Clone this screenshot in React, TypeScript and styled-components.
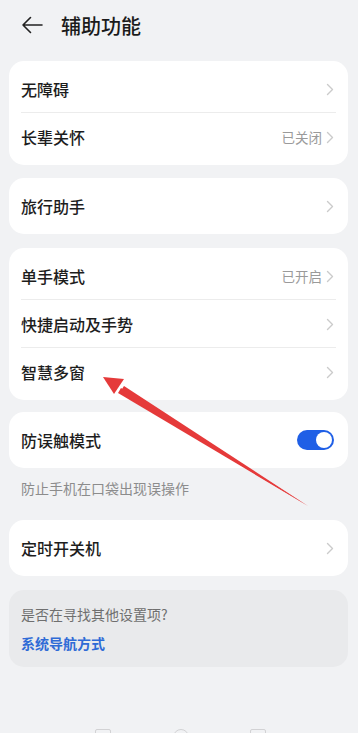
import styled, { createGlobalStyle } from "styled-components";

const GlobalStyle = createGlobalStyle`
  html, body {
    margin: 0;
    padding: 0;
    background: #f1f2f4;
  }
  body {
    font-family: "Noto Sans CJK SC", "Noto Sans", sans-serif;
    color: #1b1b1b;
  }
`;

const Page = styled.div`
  position: relative;
  width: 358px;
  height: 733px;
  overflow: hidden;
  display: flex;
  flex-direction: column;
  background: #f1f2f4;
`;

const Header = styled.div`
  height: 50px;
  display: flex;
  align-items: center;
  padding-left: 21px;
  gap: 18px;
  margin-bottom: 11px;
`;

const Title = styled.div`
  font-size: 20px;
  font-weight: 500;
  color: #1b1b1b;
`;

const List = styled.div`
  display: flex;
  flex-direction: column;
  padding: 0 10px 0 9px;
`;

const Card = styled.div<{ $gap?: number; $muted?: boolean }>`
  background: ${(p) => (p.$muted ? "#e9eaec" : "#ffffff")};
  border-radius: 15px;
  padding: 4px 0;
  margin-bottom: ${(p) => p.$gap ?? 13}px;
`;

const Row = styled.div<{ $divider?: boolean }>`
  position: relative;
  height: 48px;
  display: flex;
  align-items: center;
  padding: 0 14px 0 12px;
  &::after {
    content: "";
    display: ${(p) => (p.$divider ? "block" : "none")};
    position: absolute;
    left: 12px;
    right: 12px;
    bottom: 0;
    height: 1px;
    background: #ececec;
  }
`;

const Label = styled.div`
  flex: 1;
  font-size: 16px;
  font-weight: 500;
  color: #1d1d1d;
`;

const Value = styled.div`
  font-size: 13.5px;
  color: #9a9a9a;
  margin-right: 4px;
`;

const Caption = styled.div`
  font-size: 14px;
  color: #8c8c8c;
  padding: 10px 12px 0;
  height: 42px;
`;

const Hint = styled.div`
  padding: 10px 12px;
  display: flex;
  flex-direction: column;
  gap: 9px;
`;

const HintText = styled.div`
  font-size: 14px;
  color: #6f6f6f;
  line-height: 20px;
`;

const HintLink = styled.div`
  font-size: 14px;
  font-weight: 600;
  color: #2f6bd6;
  line-height: 20px;
`;

const Toggle = styled.div`
  width: 37px;
  height: 20px;
  border-radius: 10px;
  background: #1f5fe6;
  display: flex;
  align-items: center;
  justify-content: flex-end;
  padding: 0 2px;
  box-sizing: border-box;
`;

const Knob = styled.div`
  width: 16px;
  height: 16px;
  border-radius: 50%;
  background: #ffffff;
`;

const NavBar = styled.div`
  margin-top: auto;
  height: 6px;
  display: flex;
  justify-content: space-between;
  padding: 0 92px 0 95px;
  overflow: hidden;
`;

const NavMark = styled.div<{ $round?: boolean }>`
  width: 14px;
  height: 14px;
  margin-top: 2px;
  border: 1.5px solid #d2d2d4;
  border-radius: ${(p) => (p.$round ? "50%" : "2px")};
`;

const Annotation = styled.svg`
  position: absolute;
  left: 0;
  top: 0;
  pointer-events: none;
`;

const Chevron = () => (
  <svg width="8" height="13" viewBox="0 0 8 13">
    <path d="M1.5 1.5 L6.5 6.5 L1.5 11.5" fill="none" stroke="#cbcbcb" strokeWidth="1.4" strokeLinecap="round" strokeLinejoin="round" />
  </svg>
);

const BackArrow = () => (
  <svg width="22" height="18" viewBox="0 0 22 18">
    <path d="M21 9 H2 M9.5 1.5 L2 9 L9.5 16.5" fill="none" stroke="#222" strokeWidth="1.6" strokeLinecap="round" strokeLinejoin="round" />
  </svg>
);

const App = () => {
  return (
    <>
      <GlobalStyle />
      <Page>
        <Header>
          <BackArrow />
          <Title>辅助功能</Title>
        </Header>
        <List>
          <Card>
            <Row $divider>
              <Label>无障碍</Label>
              <Chevron />
            </Row>
            <Row>
              <Label>长辈关怀</Label>
              <Value>已关闭</Value>
              <Chevron />
            </Row>
          </Card>
          <Card $gap={14}>
            <Row>
              <Label>旅行助手</Label>
              <Chevron />
            </Row>
          </Card>
          <Card $gap={12}>
            <Row $divider>
              <Label>单手模式</Label>
              <Value>已开启</Value>
              <Chevron />
            </Row>
            <Row $divider>
              <Label>快捷启动及手势</Label>
              <Chevron />
            </Row>
            <Row>
              <Label>智慧多窗</Label>
              <Chevron />
            </Row>
          </Card>
          <Card $gap={0}>
            <Row>
              <Label>防误触模式</Label>
              <Toggle>
                <Knob />
              </Toggle>
            </Row>
          </Card>
          <Caption>防止手机在口袋出现误操作</Caption>
          <Card $gap={14}>
            <Row>
              <Label>定时开关机</Label>
              <Chevron />
            </Row>
          </Card>
          <Card $muted $gap={0}>
            <Hint>
              <HintText>是否在寻找其他设置项?</HintText>
              <HintLink>系统导航方式</HintLink>
            </Hint>
          </Card>
        </List>
        <NavBar>
          <NavMark />
          <NavMark $round />
          <NavMark />
        </NavBar>
        <Annotation width="358" height="733" viewBox="0 0 358 733">
          <path d="M308 506 L121 388 L118 393 Z" fill="#e53a3a" />
          <path d="M308 506 L124 386 L120 392 Z" fill="#e53a3a" />
          <path d="M103 377 L124 379 L114 394 Z" fill="#e53a3a" />
        </Annotation>
      </Page>
    </>
  );
};

export default App;
